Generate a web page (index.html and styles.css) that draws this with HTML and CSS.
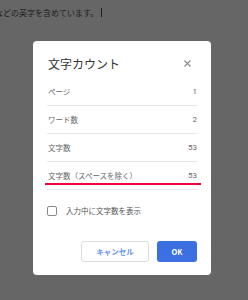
FILE: index.html
```html
<!DOCTYPE html>
<html lang="ja">
<head>
  <meta charset="UTF-8">
  <meta name="viewport" content="width=device-width, initial-scale=1.0">
  <title>文字カウント</title>
  <link rel="stylesheet" href="styles.css">
</head>
<body>
  <div class="doc">
    <p class="doc-line">などの英字を含めています。<span class="caret"></span></p>
  </div>

  <div class="dialog">
    <div class="dialog-head">
      <h2>文字カウント</h2>
      <svg class="close" width="7" height="7" viewBox="0 0 7 7">
        <path d="M0.5 0.5L6.5 6.5M6.5 0.5L0.5 6.5" stroke="#8a8a8a" stroke-width="1.1" fill="none"/>
      </svg>
    </div>

    <div class="row">
      <span class="label">ページ</span>
      <span class="value">1</span>
    </div>
    <div class="row">
      <span class="label">ワード数</span>
      <span class="value">2</span>
    </div>
    <div class="row">
      <span class="label">文字数</span>
      <span class="value">53</span>
    </div>
    <div class="row">
      <span class="label">文字数（スペースを除く）</span>
      <span class="value">53</span>
      <span class="mark"></span>
    </div>

    <label class="check">
      <span class="box"></span>
      入力中に文字数を表示
    </label>

    <div class="actions">
      <button class="btn cancel">キャンセル</button>
      <button class="btn ok">OK</button>
    </div>
  </div>
</body>
</html>
```

FILE: styles.css
```css
body {
  margin: 0;
  width: 248px;
  height: 300px;
  overflow: hidden;
  background-color: #666666;
  font-family: "Noto Sans CJK JP", "Noto Sans", sans-serif;
  position: relative;
}
.doc-line {
  margin: 0;
  padding-top: 8px;
  margin-left: -5px;
  font-size: 8px;
  line-height: 10px;
  color: #1e1e1e;
  white-space: nowrap;
}
.caret {
  display: inline-block;
  width: 1px;
  height: 9px;
  margin-left: 3px;
  background-color: #1e1e1e;
  vertical-align: -1px;
}
.dialog {
  position: absolute;
  left: 33px;
  top: 41px;
  width: 178px;
  height: 234px;
  box-sizing: border-box;
  padding: 0 14px;
  background-color: white;
  border-radius: 4px;
}
.dialog-head {
  display: flex;
  justify-content: space-between;
  align-items: center;
  padding: 14px 0 7px 1px;
  height: 16px;
}
.dialog-head h2 {
  margin: 0;
  font-size: 12px;
  font-weight: normal;
  color: #333;
}
.close {
  margin-right: 6px;
}
.row {
  position: relative;
  display: flex;
  justify-content: space-between;
  align-items: center;
  height: 27px;
  padding: 0 0 0 1px;
  border-bottom: 1px solid #e8e8e8;
  font-size: 7.5px;
  color: #666;
}
.value {
  font-family: Roboto, "Liberation Sans", sans-serif;
  font-size: 8px;
  color: #666;
}
.mark {
  position: absolute;
  left: -2px;
  right: -4px;
  bottom: 4px;
  height: 2px;
  background-color: #f0003c;
}
.check {
  display: flex;
  align-items: center;
  gap: 9px;
  margin-top: 15px;
  font-size: 7.5px;
  color: #555;
}
.box {
  width: 8px;
  height: 8px;
  border: 1.5px solid #888;
  border-radius: 2px;
}
.actions {
  display: flex;
  justify-content: flex-end;
  gap: 8px;
  margin-top: 25px;
}
.btn {
  height: 21px;
  border-radius: 3px;
  font-family: "Noto Sans CJK JP", "Noto Sans", sans-serif;
  font-size: 7.5px;
  font-weight: bold;
  cursor: pointer;
}
.cancel {
  width: 68px;
  background-color: white;
  border: 1px solid #dddddd;
  color: #6a95ea;
}
.ok {
  width: 40px;
  background-color: #3b6fe2;
  border: none;
  color: white;
}
```
